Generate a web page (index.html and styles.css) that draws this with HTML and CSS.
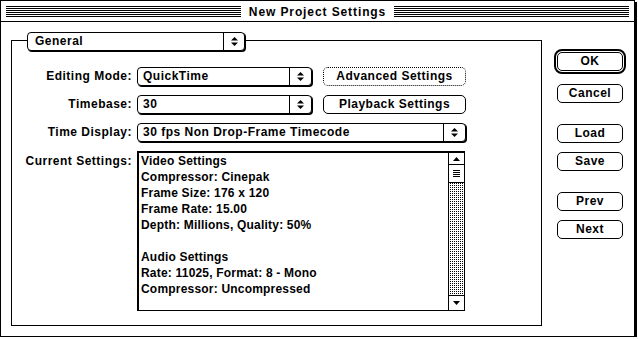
FILE: index.html
```html
<!DOCTYPE html>
<html lang="en">
<head>
    <meta charset="UTF-8">
    <title>New Project Settings</title>
    <link rel="stylesheet" href="styles.css">
</head>
<body>
    <div class="window">
        <div class="titlebar">
            <div class="stripes"></div>
            <div class="title">New Project Settings</div>
            <div class="stripes"></div>
        </div>

        <div class="content">
            <div class="group">
                <div class="popup group-popup">
                    <span class="popup-value">General</span>
                    <span class="popup-arrows">
                        <svg width="7" height="9" viewBox="0 0 7 9"><polygon points="0,3.5 3.5,0 7,3.5"/><polygon points="0,5.5 7,5.5 3.5,9"/></svg>
                    </span>
                </div>

                <div class="fields">
                    <div class="field-label">Editing Mode:</div>
                    <div class="popup">
                        <span class="popup-value">QuickTime</span>
                        <span class="popup-arrows">
                            <svg width="7" height="9" viewBox="0 0 7 9"><polygon points="0,3.5 3.5,0 7,3.5"/><polygon points="0,5.5 7,5.5 3.5,9"/></svg>
                        </span>
                    </div>
                    <button class="btn btn-side btn-focus">Advanced Settings</button>

                    <div class="field-label">Timebase:</div>
                    <div class="popup">
                        <span class="popup-value">30</span>
                        <span class="popup-arrows">
                            <svg width="7" height="9" viewBox="0 0 7 9"><polygon points="0,3.5 3.5,0 7,3.5"/><polygon points="0,5.5 7,5.5 3.5,9"/></svg>
                        </span>
                    </div>
                    <button class="btn btn-side">Playback Settings</button>

                    <div class="field-label">Time Display:</div>
                    <div class="popup span-2">
                        <span class="popup-value">30 fps Non Drop-Frame Timecode</span>
                        <span class="popup-arrows">
                            <svg width="7" height="9" viewBox="0 0 7 9"><polygon points="0,3.5 3.5,0 7,3.5"/><polygon points="0,5.5 7,5.5 3.5,9"/></svg>
                        </span>
                    </div>

                    <div class="field-label field-label-top">Current Settings:</div>
                    <div class="settings-box span-2">
                        <div class="settings-text">
                            <div>Video Settings</div>
                            <div>Compressor: Cinepak</div>
                            <div>Frame Size: 176 x 120</div>
                            <div>Frame Rate: 15.00</div>
                            <div>Depth: Millions, Quality: 50%</div>
                            <div>&nbsp;</div>
                            <div>Audio Settings</div>
                            <div>Rate: 11025, Format: 8 - Mono</div>
                            <div>Compressor: Uncompressed</div>
                        </div>
                        <div class="scrollbar">
                            <div class="scroll-arrow scroll-up">
                                <svg width="7" height="4" viewBox="0 0 7 4"><polygon points="0,4 3.5,0 7,4"/></svg>
                            </div>
                            <div class="scroll-thumb">
                                <svg width="7" height="7" viewBox="0 0 7 7"><rect y="0" width="7" height="1"/><rect y="2" width="7" height="1"/><rect y="4" width="7" height="1"/><rect y="6" width="7" height="1"/></svg>
                            </div>
                            <div class="scroll-track"></div>
                            <div class="scroll-arrow scroll-down">
                                <svg width="7" height="4" viewBox="0 0 7 4"><polygon points="0,0 7,0 3.5,4"/></svg>
                            </div>
                        </div>
                    </div>
                </div>
            </div>

            <div class="actions">
                <div class="default-ring">
                    <button class="btn">OK</button>
                </div>
                <button class="btn btn-cancel">Cancel</button>
                <button class="btn btn-load">Load</button>
                <button class="btn btn-save">Save</button>
                <button class="btn btn-prev">Prev</button>
                <button class="btn btn-next">Next</button>
            </div>
        </div>
    </div>
</body>
</html>
```

FILE: styles.css
```css
body {
    margin: 0;
    padding: 0;
    background: #fff;
    color: #000;
    font-family: "Liberation Sans", Arial, sans-serif;
    font-weight: bold;
    font-size: 12px;
    letter-spacing: 0.5px;
}

.window {
    width: 635px;
    height: 337px;
    box-sizing: border-box;
    border: 1px solid #000;
    box-shadow: 2px 2px 0 #000;
    background: #fff;
}

/* title bar */

.titlebar {
    height: 20px;
    border-bottom: 1px solid #000;
    display: flex;
    align-items: center;
}

.stripes {
    flex: 1;
    height: 11px;
    margin: 0 5px;
    background: repeating-linear-gradient(#000 0 1px, #fff 1px 2px);
}

.title {
    padding: 1px 3px 0;
    line-height: 16px;
    letter-spacing: 0.9px;
}

/* content */

.content {
    display: flex;
    align-items: flex-start;
}

.group {
    position: relative;
    width: 531px;
    height: 286px;
    box-sizing: border-box;
    margin: 18px 0 0 10px;
    padding: 26px 0 0 0;
    border: 1px solid #000;
}

.group-popup {
    position: absolute;
    top: -9px;
    left: 15px;
    width: 218px;
    height: 18px;
}

.group-popup .popup-value {
    padding-left: 7px;
}

.group-popup .popup-arrows {
    width: 20px;
}

.fields {
    display: grid;
    grid-template-columns: 125px 175px 154px;
    grid-template-rows: 19px 19px 19px 160px;
    row-gap: 9px;
}

.field-label {
    text-align: right;
    padding-right: 5px;
    line-height: 19px;
    white-space: nowrap;
}

.field-label-top {
    line-height: 16px;
    padding-top: 2px;
}

.span-2 {
    grid-column: 2 / 4;
}

/* popup menus */

.popup {
    display: flex;
    box-sizing: border-box;
    border: 1px solid #000;
    border-radius: 4px;
    box-shadow: 1px 1px 0 #000;
    background: #fff;
    height: 19px;
}

.popup-value {
    flex: 1;
    padding-left: 5px;
    line-height: 17px;
    white-space: nowrap;
}

.popup-arrows {
    width: 21px;
    border-left: 1px solid #000;
    display: flex;
    align-items: center;
    justify-content: center;
}

/* buttons */

.btn {
    font: inherit;
    letter-spacing: inherit;
    color: #000;
    background: #fff;
    border: 1px solid #000;
    border-radius: 5px;
    height: 19px;
    padding: 0;
    line-height: 17px;
    box-sizing: border-box;
}

.btn-side {
    margin-left: 11px;
    width: 143px;
}

.btn-focus {
    border-style: dotted;
}

/* settings list */

.settings-box {
    display: flex;
    box-sizing: border-box;
    width: 328px;
    border: 1px solid #000;
    border-top-width: 2px;
    border-left-width: 2px;
}

.settings-text {
    flex: 1;
    padding-left: 2px;
    line-height: 16px;
    white-space: nowrap;
    letter-spacing: 0.2px;
}

.scrollbar {
    width: 15px;
    border-left: 1px solid #000;
    display: flex;
    flex-direction: column;
}

.scroll-arrow {
    display: flex;
    align-items: center;
    justify-content: center;
}

.scroll-up {
    height: 11px;
    border-bottom: 1px solid #000;
}

.scroll-thumb {
    height: 17px;
    border-bottom: 1px solid #000;
    display: flex;
    align-items: center;
    justify-content: center;
}

.scroll-track {
    flex: 1;
    background: repeating-conic-gradient(#000 0 25%, #fff 0 100%) 0 0 / 2px 2px;
}

.scroll-down {
    height: 14px;
    border-top: 1px solid #000;
}

/* right column */

.actions {
    width: 72px;
    margin: 27px 0 0 12px;
    display: flex;
    flex-direction: column;
    align-items: center;
}

.default-ring {
    border: 2px solid #000;
    border-radius: 8px;
    padding: 1px;
    display: flex;
}

.actions .btn {
    width: 66px;
}

.btn-cancel {
    margin-top: 10px;
}

.btn-load {
    margin-top: 21px;
}

.btn-save {
    margin-top: 9px;
}

.btn-prev {
    margin-top: 21px;
}

.btn-next {
    margin-top: 9px;
}
```
